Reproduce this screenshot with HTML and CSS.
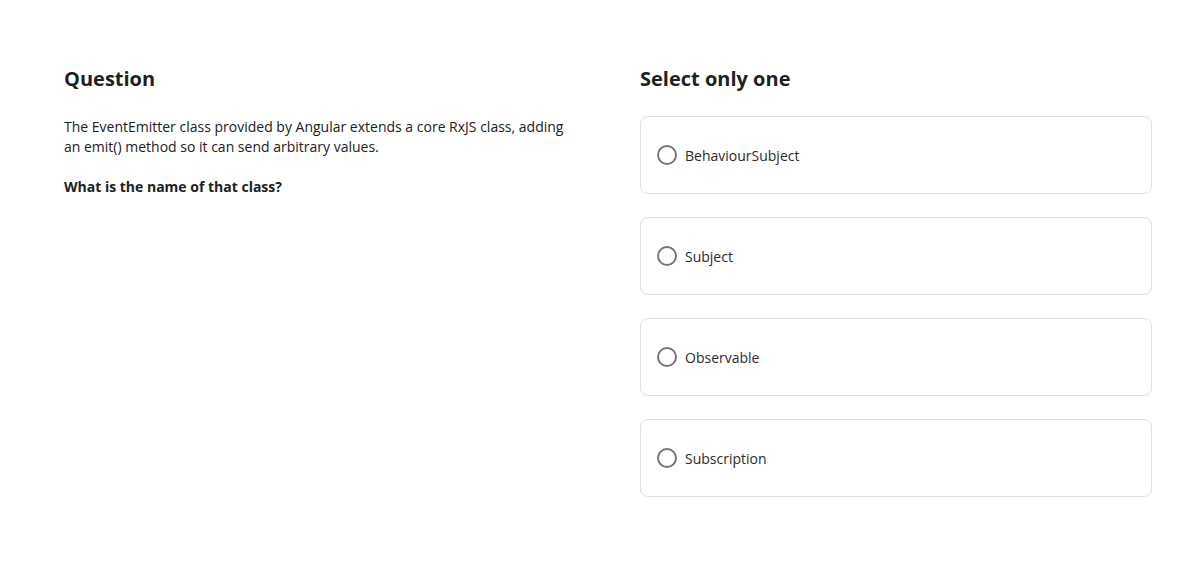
FILE: index.html
```html
<!DOCTYPE html>
<html lang="en">
<head>
<meta charset="utf-8">
<title>Question</title>
<link rel="stylesheet" href="styles.css">
</head>
<body>
<div class="page">
  <section class="col">
    <h2 class="title">Question</h2>
    <p class="text">The EventEmitter class provided by Angular extends a core RxJS class, adding an emit() method so it can send arbitrary values.</p>
    <p class="text strong">What is the name of that class?</p>
  </section>
  <section class="col">
    <h2 class="title">Select only one</h2>
    <div class="options">
      <label class="option"><span class="radio"></span><span class="label">BehaviourSubject</span></label>
      <label class="option"><span class="radio"></span><span class="label">Subject</span></label>
      <label class="option"><span class="radio"></span><span class="label">Observable</span></label>
      <label class="option"><span class="radio"></span><span class="label">Subscription</span></label>
    </div>
  </section>
</div>
</body>
</html>
```
FILE: styles.css
```css
html, body {
  margin: 0;
  padding: 0;
  background: #ffffff;
}
body {
  font-family: "Open Sans", "Noto Sans", sans-serif;
  color: #212121;
}
.page {
  display: grid;
  grid-template-columns: 512px 512px;
  column-gap: 64px;
  padding: 65px 40px 0 64px;
}
.title {
  margin: 0 0 24px;
  font-size: 20px;
  line-height: 28px;
  font-weight: 700;
  color: #1f1f1f;
}
.text {
  margin: 0 0 20px;
  font-size: 14px;
  line-height: 20px;
  color: #212121;
}
.strong {
  font-weight: 700;
}
.options {
  display: flex;
  flex-direction: column;
  gap: 23px;
  margin-top: -1px;
}
.option {
  display: flex;
  align-items: center;
  gap: 8px;
  height: 78px;
  box-sizing: border-box;
  padding: 0 16px;
  border: 1px solid #e0e0e0;
  border-radius: 8px;
  background: #fff;
}
.radio {
  width: 20px;
  height: 20px;
  box-sizing: border-box;
  border: 2px solid #757575;
  border-radius: 50%;
  flex: none;
}
.label {
  padding-top: 2px;
  font-size: 14px;
  line-height: 20px;
  color: #2b2b2b;
}
```
